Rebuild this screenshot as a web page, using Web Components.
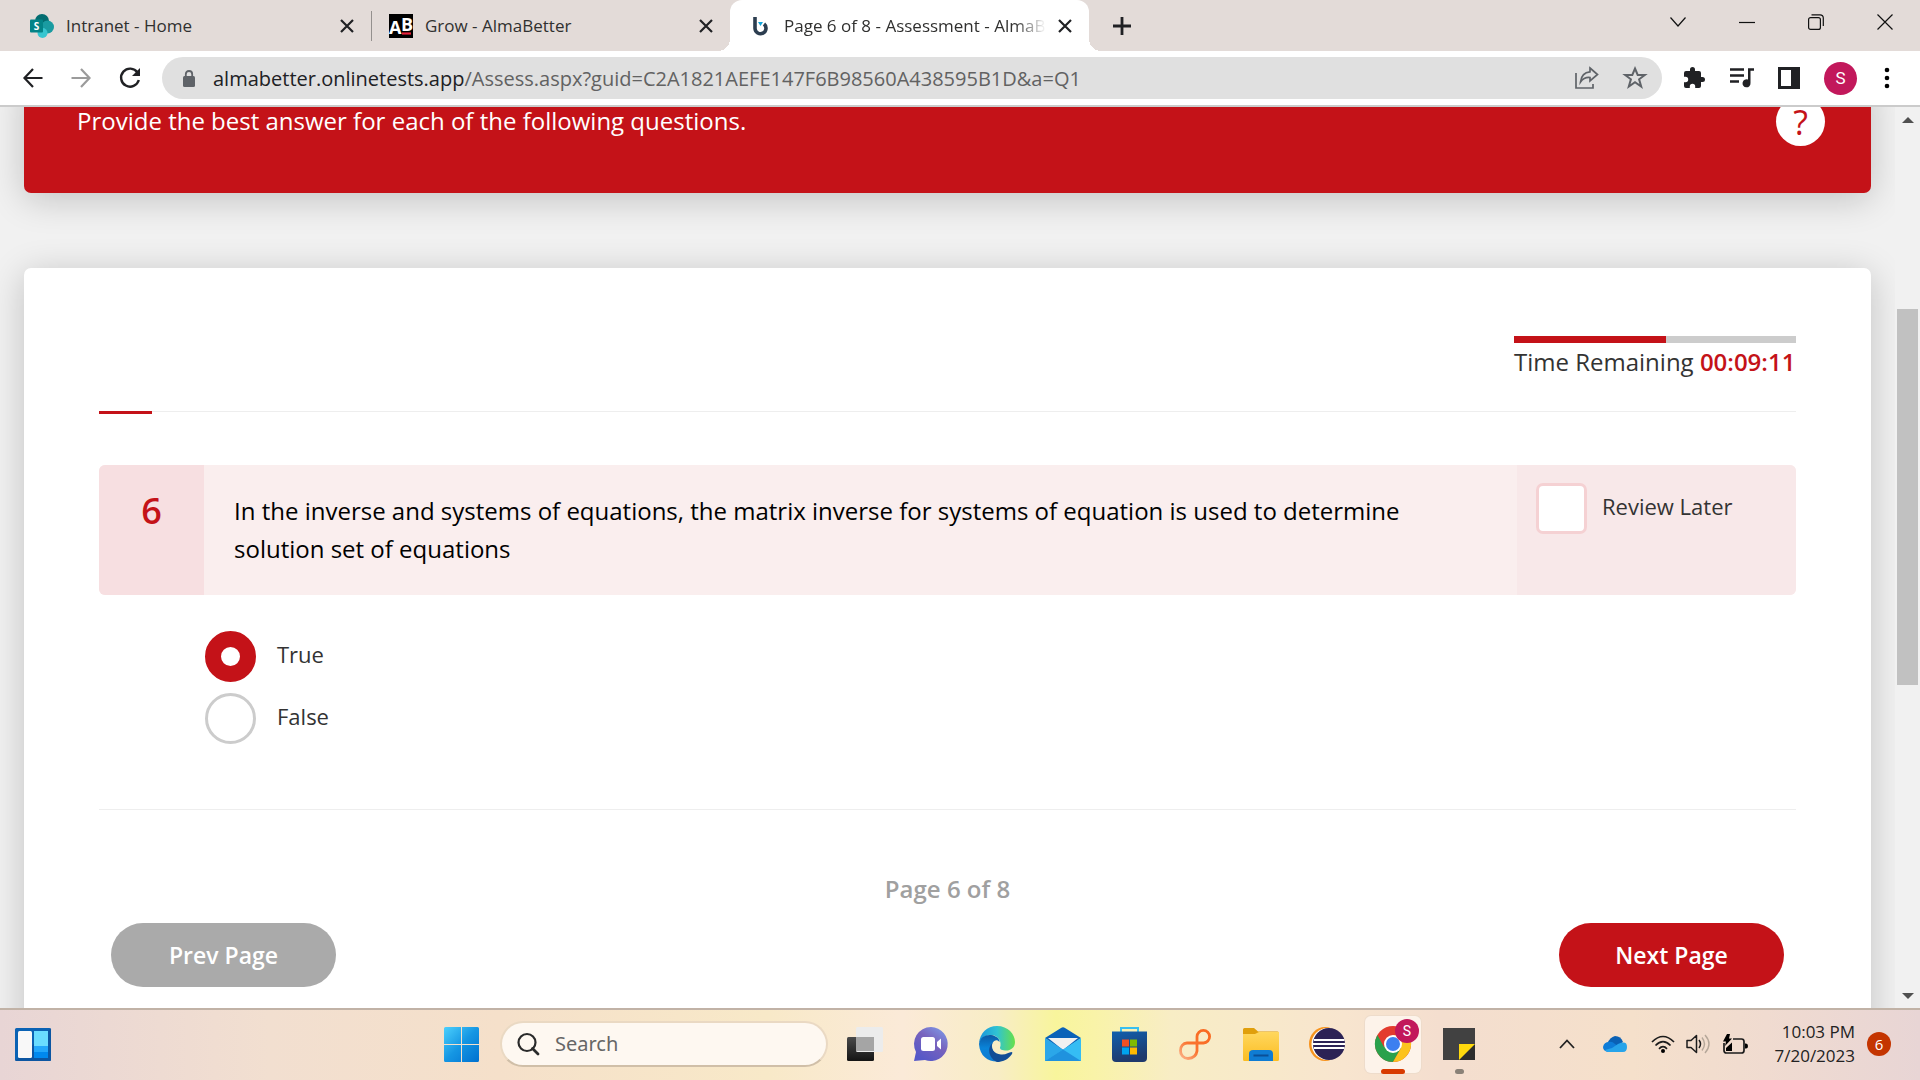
<!DOCTYPE html>
<html lang="en">
<head>
<meta charset="utf-8">
<title>Page 6 of 8 - Assessment - AlmaBetter</title>
<style>
html,body{margin:0;height:100%}
body{font-family:"Open Sans","Noto Sans",sans-serif;color:#333;overflow:hidden}
desktop-screen{height:100vh}
</style>
</head>
<body>
<desktop-screen></desktop-screen>
<script>
const define=(name,html,setup)=>customElements.define(name,class extends HTMLElement{
  constructor(){
    super();
    const t=document.createElement('template');
    t.innerHTML='<style>*{box-sizing:border-box}button{font:inherit;color:inherit;border:0;background:none;padding:0;margin:0}svg{display:block}</style>'+html;
    this.attachShadow({mode:'open'}).append(t.content.cloneNode(true));
    if(setup)setup(this,this.shadowRoot);
  }
});

const icons={
  close:['0 0 12 12','<path d="M0 0L12 12M12 0L0 12" stroke="#202124" stroke-width="2.2"/>'],
  plus:['0 0 18 18','<path d="M9 0V18M0 9H18" stroke="#202124" stroke-width="2.8"/>'],
  chevron:['0 0 16 10','<path d="M.5 .5L8 9L15.500 .5" fill="none" stroke="#111" stroke-width="1.200"/>'],
  minimise:['0 0 16 10','<path d="M0 5.500H16" stroke="#111" stroke-width="1.200"/>'],
  restore:['0 0 16 16','<rect x=".6" y="3.600" width="11.800" height="11.800" rx="2" fill="none" stroke="#111" stroke-width="1.200"/><path d="M3.500 .8H12Q15.300 .8 15.300 4V12" fill="none" stroke="#111" stroke-width="1.200"/>'],
  cross:['0 0 16 16','<path d="M.5 .5L15.500 15.500M15.500 .5L.5 15.500" stroke="#111" stroke-width="1.200"/>'],
  back:['0 0 20 20','<path d="M19.500 10H2M10 1L1.500 10L10 19" fill="none" stroke="#202124" stroke-width="2.200"/>'],
  forward:['0 0 20 20','<path d="M.5 10H18M10 1L18.500 10L10 19" fill="none" stroke="#9b9b9b" stroke-width="2.200"/>'],
  reload:['0 0 22 22','<path d="M18.500 5.500A9 9 0 1 0 19.800 13" fill="none" stroke="#202124" stroke-width="2.400"/><path d="M21 1V9H13Z" fill="#202124"/>'],
  lock:['0 0 12 17','<rect y="6" width="12" height="11" rx="1.500" fill="#5f6368"/><path d="M2.800 7V4.200Q2.800 1 6 1T9.200 4.200V7" fill="none" stroke="#5f6368" stroke-width="1.800"/>'],
  share:['0 0 24 22','<path d="M1 6V21H18V17" fill="none" stroke="#5f6368" stroke-width="1.700"/><path d="M15 1L22.500 7.500L15 14V10.500Q9 10 5.500 15Q6.500 5.500 15 4.800Z" fill="none" stroke="#5f6368" stroke-width="1.700"/>'],
  star:['0 0 24 24','<path d="M12 2.500L14.700 9H21.800L16.100 13.300L18.200 20.500L12 16.200L5.800 20.500L7.900 13.300L2.200 9H9.300Z" fill="none" stroke="#5f6368" stroke-width="2"/>'],
  puzzle:['0 0 24 24','<path d="M20.500 11H19V7a2 2 0 0 0-2-2h-4V3.500a2.500 2.500 0 0 0-5 0V5H4a2 2 0 0 0-2 2v3.800h1.500a2.700 2.700 0 0 1 0 5.400H2V20a2 2 0 0 0 2 2h3.800v-1.500a2.700 2.700 0 0 1 5.400 0V22H17a2 2 0 0 0 2-2v-4h1.500a2.500 2.500 0 0 0 0-5z" fill="#202124"/>'],
  queue:['0 0 24 24','<path d="M0 3.500H14M0 9.500H14M0 15.500H9" stroke="#202124" stroke-width="2.400"/><path d="M24 2.300V4.800H20.500V17A4 4 0 1 1 18 13.600V2.300Z" fill="#202124"/>'],
  panel:['0 0 22 22','<path d="M0 0H22V22H0ZM3 3V19H13V3Z" fill="#202124" fill-rule="evenodd"/>'],
  dots:['0 0 6 22','<circle cx="3" cy="3" r="2.300"/><circle cx="3" cy="11" r="2.300"/><circle cx="3" cy="19" r="2.300"/>'],
  sharepoint:['0 0 24 24','<circle cx="12" cy="7" r="7" fill="#036c70"/><circle cx="17.500" cy="13" r="6.500" fill="#1a9ba1"/><circle cx="12.500" cy="19" r="5" fill="#37c6d0"/><rect y="5.500" width="13" height="13" rx="1" fill="#038387"/><text x="6.500" y="15.700" text-anchor="middle" font-size="10" font-weight="700" fill="#fff">S</text>'],
  ab:['0 0 24 24','<path d="M0 0H24V24H0Z"/><text x="0" y="20" font-size="18" font-weight="700" fill="#fff">A</text><text x="12" y="17" font-size="18" font-weight="700" fill="#fff">B</text><path d="M13 19.500H22" stroke="#e8203a" stroke-width="2.200"/>'],
  brainy:['0 0 16 20','<path d="M3 1V12.500A5.500 5.500 0 1 0 12 8" fill="none" stroke="#2c3e50" stroke-width="3.600"/><path d="M6 6H11L8.500 10Z" fill="#12a5dc"/>'],
  widgets:['0 0 36 33','<rect width="36" height="33" rx="1.500" fill="#0a62b4"/><path d="M36 0V33H0Z" fill="#0d4e96" opacity=".6"/><rect x="3" y="3" width="14" height="27" rx="1.500" fill="#f8f8f8"/><path d="M19 3H33V18H19Z" fill="#69dcff"/><path d="M19 18H33V24H19Z" fill="#22a7fb"/><path d="M19 24H33V30H19Z" fill="#0089ef"/>'],
  start:['0 0 35 35','<defs><linearGradient id="g" x2="1" y2="1"><stop stop-color="#4cd0fd"/><stop offset=".5" stop-color="#1596e3"/><stop offset="1" stop-color="#0070cf"/></linearGradient></defs><path d="M1.500 0H17V17H0V1.500Q0 0 1.500 0ZM18 0H33.500Q35 0 35 1.500V17H18ZM0 18H17V35H1.500Q0 35 0 33.500ZM18 18H35V33.500Q35 35 33.500 35H18Z" fill="url(#g)"/>'],
  search:['0 0 22 23','<circle cx="10" cy="9.500" r="8.500" fill="none" stroke="#2a2a2a" stroke-width="2.200"/><path d="M15.500 15.500L21 21" stroke="#2a2a2a" stroke-width="2.800" stroke-linecap="round"/>'],
  taskview:['0 0 36 34','<defs><linearGradient id="g" x2="0" y2="1"><stop stop-color="#4a4a4a"/><stop offset="1" stop-color="#141414"/></linearGradient></defs><rect y="10" width="27" height="24" rx="1.500" fill="url(#g)"/><rect x="9" width="27" height="25" rx="1.500" fill="#ececec"/><path d="M9 10H27V24H9Z" fill="#a5a5a5"/>'],
  chat:['0 0 34 34','<defs><linearGradient id="g" x1="1" y1="0" x2=".3" y2="1"><stop stop-color="#7ea2ee"/><stop offset=".5" stop-color="#7862bd"/><stop offset="1" stop-color="#5558c8"/></linearGradient></defs><path d="M17 0A17 17 0 1 1 11 33L0 34L2 25A17 17 0 0 1 17 0Z" fill="url(#g)"/><rect x="7" y="10" width="14" height="14" rx="2.500" fill="#fff"/><path d="M23 15L27 11.500V22.500L23 19Z" fill="#fff"/>'],
  edge:['0 0 36 36','<defs><linearGradient id="g" x2="1"><stop stop-color="#1a94dc"/><stop offset=".5" stop-color="#30c3d3"/><stop offset="1" stop-color="#66e04a"/></linearGradient><linearGradient id="h" x2="0" y2="1"><stop stop-color="#0c59a4"/><stop offset=".5" stop-color="#0a84d9"/><stop offset="1" stop-color="#0f7ad0"/></linearGradient></defs><path d="M0 17C1 7 8 0 18 0C29 0 36 8 36 16C36 22 31 25 26 24.500C22 24 20 23 21.500 20C22.500 13 17 9 12 9C6 9 2 13 0 17Z" fill="url(#g)"/><path d="M0 18C1 11 7 8.500 12 9C17 9.500 21 13 20.500 16C17 12 13 16 13 20C13 28 21 34 29 32C19 39 1 36 0 18Z" fill="url(#h)"/><path d="M13.500 17C11 22 15 28 22 28.500C27 29 30 26 32.500 26Q34 26 33 28C29 34 23 36 18 36C11 33 7 23 13.500 17Z" fill="#114d96"/>'],
  mail:['0 0 36 34','<path d="M0 11L16 1Q18 -.5 20 1L36 11L18 24Z" fill="#0a62b8"/><path d="M3 11H33L18 23Z" fill="#f1f1f1"/><path d="M0 11L36 34H0Z" fill="#2ba7e9"/><path d="M36 11L0 34H36Z" fill="#35bdf4"/><path d="M18 22.500L36 34H0Z" fill="#1f92de"/>'],
  store:['0 0 35 35','<defs><linearGradient id="g" x2=".3" y2="1"><stop stop-color="#105fae"/><stop offset="1" stop-color="#1f3a6c"/></linearGradient></defs><path d="M9 7V1H26V7" fill="none" stroke="#38bff0" stroke-width="2"/><path d="M0 4.500H35V31Q35 35 31 35H4Q0 35 0 31Z" fill="url(#g)"/><path d="M10 12.500H17V19.500H10Z" fill="#f25022"/><path d="M18 12.500H25V19.500H18Z" fill="#7fba00"/><path d="M10 20.500H17V27.500H10Z" fill="#00a4ef"/><path d="M18 20.500H25V27.500H18Z" fill="#ffb900"/>'],
  loop:['0 0 32 32','<defs><linearGradient id="g" x1="1" y1="0" x2="0" y2="1"><stop stop-color="#f9691f"/><stop offset=".6" stop-color="#fa7430"/><stop offset="1" stop-color="#fbb288"/></linearGradient></defs><path d="M18 15V8.500A6.300 6.300 0 1 1 24.500 15H8A7 7 0 0 0 1.500 22.500A7.500 7.500 0 0 0 9 30.500Q17 30 18 23V14" fill="none" stroke="url(#g)" stroke-width="2.800"/>'],
  folder:['0 0 36 33','<defs><linearGradient id="g" x2="0" y2="1"><stop stop-color="#ffd75e"/><stop offset="1" stop-color="#fbbd23"/></linearGradient></defs><path d="M0 1.500Q0 0 1.500 0H11L15 3.500H34.500Q36 3.500 36 5V12H0Z" fill="#e09f0c"/><path d="M0 6H12L16 4H36V31.500Q36 33 34.500 33H1.500Q0 33 0 31.500Z" fill="url(#g)"/><path d="M6 33V26Q6 22 10 22H26Q30 22 30 26V33Z" fill="#0f7cd3"/><path d="M10.500 27.500H25.500" stroke="#0a4f97" stroke-width="2"/>'],
  eclipse:['0 0 36 34','<ellipse cx="16" cy="17" rx="16" ry="17" fill="#f7941e"/><circle cx="18.500" cy="17" r="16" fill="#fff"/><circle cx="20" cy="17" r="16" fill="#2c2255"/><path d="M5 13H35.500M4 17H36M5 21H35.500" stroke="#fff" stroke-width="2"/>'],
  chrome:['0 0 36 36','<circle cx="18" cy="18" r="18" fill="#e33b2e"/><path d="M2.400 9A18 18 0 0 0 18 36L26 22L18 18L9 21Z" fill="#2aa14c"/><path d="M18 36A18 18 0 0 0 33.600 9H18L26 22Z" fill="#fcc31e"/><circle cx="18" cy="18" r="9" fill="#fff"/><circle cx="18" cy="18" r="7" fill="#3c7ff0"/>'],
  notes:['0 0 32 32','<path d="M0 0H32V32H0Z" fill="#414141"/><path d="M32 16V32H16Z" fill="#2d2d2d"/><path d="M16 16H32L16 32Z" fill="#ffd90d"/>'],
  up:['0 0 16 10','<path d="M1 9L8 1.500L15 9" fill="none" stroke="#222" stroke-width="1.800"/>'],
  onedrive:['0 0 24 16','<path d="M4 8Q7 1 12 0Q18 0 20 6L12 12Z" fill="#0a61b5"/><path d="M5 16Q0 15 0 11Q1 6 6 6Q9 5 12 8L20 14Z" fill="#0d7cd8"/><path d="M9 12Q12 10 15 8Q24 4 24 11Q24 16 20 16H5Q3 16 2 14Z" fill="#27a4ea"/>'],
  wifi:['0 0 24 18','<path d="M1 7Q12 -4 23 7M4.500 10.500Q12 3 19.500 10.500M8 13.800Q12 9.500 16 13.800" fill="none" stroke="#1c1c1c" stroke-width="1.700"/><circle cx="12" cy="16" r="2"/>'],
  sound:['0 0 25 20','<path d="M1 6.500H5L10.500 1.500V18.500L5 13.500H1Z" fill="none" stroke="#1c1c1c" stroke-width="1.500" stroke-linejoin="round"/><path d="M13 6Q16 10 13 14" fill="none" stroke="#1c1c1c" stroke-width="1.500"/><path d="M16 3.500Q21 10 16 16.500M19 1Q27 10 19 19" fill="none" stroke="#b5a799" stroke-width="1.400"/>'],
  battery:['0 0 25 20','<path d="M10 5H18.500Q21 5 21 7.500V16.500Q21 19 18.500 19H3.500Q1 19 1 16.500V9" fill="none" stroke="#1c1c1c" stroke-width="1.700"/><path d="M22 9.500H23Q25 9.500 25 12T23 14.500H22Z"/><path d="M3 17V14L9 8.500V17Z"/><path d="M4 0L0 7.500H3L2 12L9 4.500H6L7 0Z"/>']
};
define('ui-icon','<style>:host{display:block;flex:none;font-family:"Open Sans",sans-serif}svg{width:100%;height:100%;overflow:visible}</style><svg aria-hidden="true"></svg>',(host,root)=>{
  const [box,shape]=icons[host.getAttribute('name')];
  const s=root.querySelector('svg');
  s.setAttribute('viewBox',box);s.innerHTML=shape;
  const [,,w,h]=box.split(' ');
  host.style.width=w+'px';host.style.height=h+'px';
});

define('browser-tab',`<style>
:host{display:flex;align-items:center;width:359px;height:51px;padding:0 18px;font:17px/24px "Open Sans",sans-serif;color:#30302f;position:relative}
:host([active]){background:#fff;border-radius:12px 12px 0 0}
:host([active])::before,:host([active])::after{content:"";position:absolute;bottom:0;width:12px;height:12px}
:host([active])::before{left:-12px;background:radial-gradient(circle at 0 0,transparent 12px,#fff 12px)}
:host([active])::after{right:-12px;background:radial-gradient(circle at 100% 0,transparent 12px,#fff 12px)}
.icon{width:24px;margin-right:12px;display:flex;justify-content:center}
.title{flex:1;min-width:0;overflow:hidden;white-space:nowrap;margin-right:13px}
:host([active]) .title{mask-image:linear-gradient(90deg,#000 88%,transparent)}
</style><span class="icon"><slot name="icon"></slot></span><span class="title"><slot></slot></span><button aria-label="Close tab"><ui-icon name="close"></ui-icon></button>`);

define('tab-strip',`<style>
:host{display:flex;align-items:center;height:51px;padding-left:12px;background:#e3dbd8}
.rule{width:1px;height:30px;background:#94908e;margin-right:-1px}
.new{margin-left:24px}
.window{margin-left:auto;display:flex;align-items:center;gap:53px;padding:0 27px 8px 0}
</style>
<browser-tab><ui-icon slot="icon" name="sharepoint"></ui-icon>Intranet - Home</browser-tab>
<span class="rule"></span>
<browser-tab><ui-icon slot="icon" name="ab"></ui-icon>Grow - AlmaBetter</browser-tab>
<browser-tab active><ui-icon slot="icon" name="brainy"></ui-icon>Page 6 of 8 - Assessment - AlmaBetter</browser-tab>
<button class="new" aria-label="New tab"><ui-icon name="plus"></ui-icon></button>
<div class="window"><button aria-label="Search tabs"><ui-icon name="chevron"></ui-icon></button><button aria-label="Minimise"><ui-icon name="minimise"></ui-icon></button><button aria-label="Restore"><ui-icon name="restore"></ui-icon></button><button aria-label="Close"><ui-icon name="cross"></ui-icon></button></div>`);

define('address-bar',`<style>
:host{display:flex;align-items:center;height:56px;background:#fff;border-bottom:2px solid #cbcbcb;padding:0 30px 0 23px}
.nav{display:flex;align-items:center;gap:28px;width:139px}
.box{flex:1;display:flex;align-items:center;height:42px;border-radius:21px;background:#e0e0e0;padding:0 15px 0 21px;min-width:0}
.url{flex:1;margin-left:18px;padding-top:2px;font:20px/28px "Open Sans",sans-serif;color:#626262;white-space:nowrap;overflow:hidden}
.url b{font-weight:400;color:#202124}
.marks{display:flex;align-items:center;gap:24px}
.tools{display:flex;align-items:center;gap:24px;margin-left:20px}
.avatar{width:33px;height:33px;margin-right:3px;border-radius:50%;background:#c2185b;color:#fff;font:17px/33px Roboto,sans-serif;text-align:center}
</style>
<div class="nav"><button aria-label="Back"><ui-icon name="back"></ui-icon></button><button aria-label="Forward"><ui-icon name="forward"></ui-icon></button><button aria-label="Reload"><ui-icon name="reload"></ui-icon></button></div>
<div class="box"><ui-icon name="lock"></ui-icon><span class="url"><b>almabetter.onlinetests.app</b>/Assess.aspx?guid=C2A1821AEFE147F6B98560A438595B1D&amp;a=Q1</span><span class="marks"><button aria-label="Share"><ui-icon name="share"></ui-icon></button><button aria-label="Bookmark"><ui-icon name="star"></ui-icon></button></span></div>
<div class="tools"><button aria-label="Extensions"><ui-icon name="puzzle"></ui-icon></button><button aria-label="Media"><ui-icon name="queue"></ui-icon></button><button aria-label="Side panel"><ui-icon name="panel"></ui-icon></button><button class="avatar" aria-label="Profile">S</button><button aria-label="Menu"><ui-icon name="dots"></ui-icon></button></div>`);

define('page-banner',`<style>
:host{display:flex;justify-content:space-between;align-items:flex-start;height:116px;margin-top:-30px;padding:30px 46px 0 53px;background:#c41218;border-radius:7px;color:#fff;box-shadow:0 6px 36px rgba(0,0,0,.2);font:24px/28px "Open Sans",sans-serif}
p{margin:0}
.help{width:49px;height:49px;margin-top:-10px;border-radius:50%;background:#fff;color:#c41218;font-size:34px;line-height:28px}
</style><p><slot></slot></p><button class="help" aria-label="Help">?</button>`);

define('time-remaining',`<style>
:host{display:block;width:282px;font:24px/34px "Open Sans",sans-serif;white-space:nowrap}
.bar{height:7px;background:#ccc;margin-bottom:2px}.bar i{display:block;height:7px;width:54%;background:#c41218}
b{font-weight:600;color:#c41218}
</style><div class="bar"><i></i></div>Time Remaining <b><slot></slot></b>`);

define('question-box',`<style>
:host{display:flex;min-height:130px;border-radius:6px;overflow:hidden;background:#faeeee}
.number{width:105px;background:#f7dfe1;text-align:center;color:#c41218;font:600 36px/38px "Open Sans",sans-serif;padding-top:27px}
.text{flex:1;padding:27px 90px 27px 30px;font:24px/38px "Open Sans",sans-serif;color:#000}
label{display:flex;gap:15px;width:279px;background:#f8e8e9;padding:18px 0 0 19px;font:22px/46px "Open Sans",sans-serif;color:#333}
input{appearance:none;margin:0;width:51px;height:51px;border:3px solid #f5d1d3;border-radius:7px;background:#fff}
</style><div class="number">6</div><div class="text"><slot></slot></div><label><input type="checkbox">Review Later</label>`);

define('answer-list',`<style>
:host{display:flex;flex-direction:column;gap:11px;padding-left:106px;font:22px/46px "Open Sans",sans-serif}
label{display:flex;gap:21px;width:max-content}
input{appearance:none;margin:0;width:51px;height:51px;border:3px solid #ccc;border-radius:50%;background:#fff}
input:checked{border:16px solid #c41218}
</style><label><input type="radio" name="answer" checked>True</label><label><input type="radio" name="answer">False</label>`);

define('page-nav',`<style>
:host{display:flex;justify-content:space-between;align-items:flex-end;height:115px;padding:0 12px;font:600 24px/34px "Open Sans",sans-serif}
span{align-self:flex-start;color:#a0a0a0}
button{width:225px;height:64px;border-radius:32px;background:#c41218;color:#fff;font-size:23px}
.prev{background:#aaa}
</style><button class="prev">Prev Page</button><span>Page 6 of 8</span><button>Next Page</button>`);

define('assessment-card',`<style>
:host{display:block;height:800px;margin-top:75px;padding:68px 75px 0;background:#fff;border-radius:7px;box-shadow:0 6px 36px rgba(0,0,0,.2)}
time-remaining{margin-left:auto}
.progress{height:3px;margin:32px 0 51px;border-top:1px solid #eee;position:relative}
.progress i{position:absolute;top:-1px;left:0;width:53px;height:3px;background:#c41218}
answer-list{margin:36px 0 65px}
hr{margin:0 0 62px;border:0;border-top:1px solid #eee}
</style>
<time-remaining>00:09:11</time-remaining>
<div class="progress"><i></i></div>
<question-box>In the inverse and systems of equations, the matrix inverse for systems of equation is used to determine solution set of equations</question-box>
<answer-list></answer-list><hr><page-nav></page-nav>`);

define('scroll-bar',`<style>
:host{display:flex;flex-direction:column;align-items:center;width:25px;background:#f1f1f1;padding:10px 0 9px}
i{width:0;height:0;border:6px solid transparent;border-top:0;border-bottom:6px solid #505050}
i:last-child{margin-top:auto;border-top:6px solid #505050;border-bottom:0}
b{width:21px;height:376px;background:#c1c1c1;margin-top:186px}
</style><i></i><b></b><i></i>`);

define('page-view',`<style>
:host{flex:1;min-height:0;display:flex;overflow:hidden;background:#f1f1f1}
main{flex:1;min-width:0;padding:0 24px;overflow:hidden}
</style><main><page-banner>Provide the best answer for each of the following questions.</page-banner><assessment-card></assessment-card></main><scroll-bar></scroll-bar>`);

define('task-bar',`<style>
:host{display:flex;align-items:center;height:72px;border-top:2px solid #c1b2a6;padding:0 29px 2px 15px;font:17px/24px "Open Sans",sans-serif;color:#222;background:linear-gradient(90deg,#e8d5d5 0,#f2dfd0 14%,#f5e0ca 26%,#f8e9c8 40%,#fbead8 47%,#f8edc5 52%,#f8f59c 55%,#f9f3a8 57%,#f8edc5 61%,#f8e5cf 70%,#f4decf 75%,#f5e0cb 85%,#f0dbd0 92%,#e8d5d5)}
.side,.tray{flex:1;display:flex;align-items:center}
.tray{justify-content:flex-end}
.apps{display:flex;align-items:center;margin-left:30px}
.search{display:flex;align-items:center;width:328px;height:46px;margin:0 4px 0 21px;padding:0 15px;border:2px solid #ead9c3;border-bottom-color:#d0bfa8;border-radius:23px;background:#fef8f1;gap:16px}
input{border:0;outline:0;padding:0;background:none;font:20px/28px "Noto Sans",sans-serif;color:#555;width:200px}
input::placeholder{color:#666;opacity:1}
.app{width:66px;height:66px;display:flex;align-items:center;justify-content:center;position:relative}
.on::before{content:"";position:absolute;left:5px;top:5px;width:56px;height:57px;border-radius:6px;background:#fdf3ea;box-shadow:0 0 0 1px #eedccb}
.app ui-icon{position:relative}
.app span{position:absolute;left:35px;top:8px;width:24px;height:24px;border-radius:50%;background:#c2185b;color:#fff;font:14px/24px Roboto,sans-serif}
.app i{position:absolute;left:21px;bottom:3px;width:24px;height:5px;border-radius:3px;background:#d83b01}
.app .idle{left:29px;width:9px;background:#8a8177}
.clock{width:86px;text-align:right;margin:0 12px 0 10px;white-space:nowrap}
.count{width:24px;height:24px;border-radius:50%;background:#c43501;color:#fff;font-size:15px;line-height:24px;text-align:center}
.tray>button{margin-right:28px}.tray>button.cloud{margin-right:24px}.tray>button.near{margin-right:12px}.tray>button.wifi{margin-right:11px}
</style>
<div class="side"><button aria-label="Widgets"><ui-icon name="widgets"></ui-icon></button></div>
<div class="apps"><button aria-label="Start"><ui-icon name="start"></ui-icon></button>
<label class="search"><ui-icon name="search"></ui-icon><input placeholder="Search" aria-label="Search"></label>
<button class="app" aria-label="Task view"><ui-icon name="taskview"></ui-icon></button><button class="app" aria-label="Chat"><ui-icon name="chat"></ui-icon></button><button class="app" aria-label="Edge"><ui-icon name="edge"></ui-icon></button><button class="app" aria-label="Mail"><ui-icon name="mail"></ui-icon></button><button class="app" aria-label="Store"><ui-icon name="store"></ui-icon></button><button class="app" aria-label="Loop"><ui-icon name="loop"></ui-icon></button><button class="app" aria-label="Files"><ui-icon name="folder"></ui-icon></button><button class="app" aria-label="Eclipse"><ui-icon name="eclipse"></ui-icon></button><button class="app on" aria-label="Chrome"><ui-icon name="chrome"></ui-icon><span>S</span><i></i></button><button class="app" aria-label="Sticky notes"><ui-icon name="notes"></ui-icon><i class="idle"></i></button></div>
<div class="tray"><button aria-label="Hidden icons"><ui-icon name="up"></ui-icon></button><button class="cloud" aria-label="OneDrive"><ui-icon name="onedrive"></ui-icon></button><button class="wifi" aria-label="Network"><ui-icon name="wifi"></ui-icon></button><button class="near" aria-label="Volume"><ui-icon name="sound"></ui-icon></button><button class="wifi" aria-label="Battery"><ui-icon name="battery"></ui-icon></button><div class="clock">10:03 PM<br>7/20/2023</div><div class="count">6</div></div>`);

define('desktop-screen','<style>:host{display:flex;flex-direction:column}</style><tab-strip></tab-strip><address-bar></address-bar><page-view></page-view><task-bar></task-bar>');
</script>
</body>
</html>
